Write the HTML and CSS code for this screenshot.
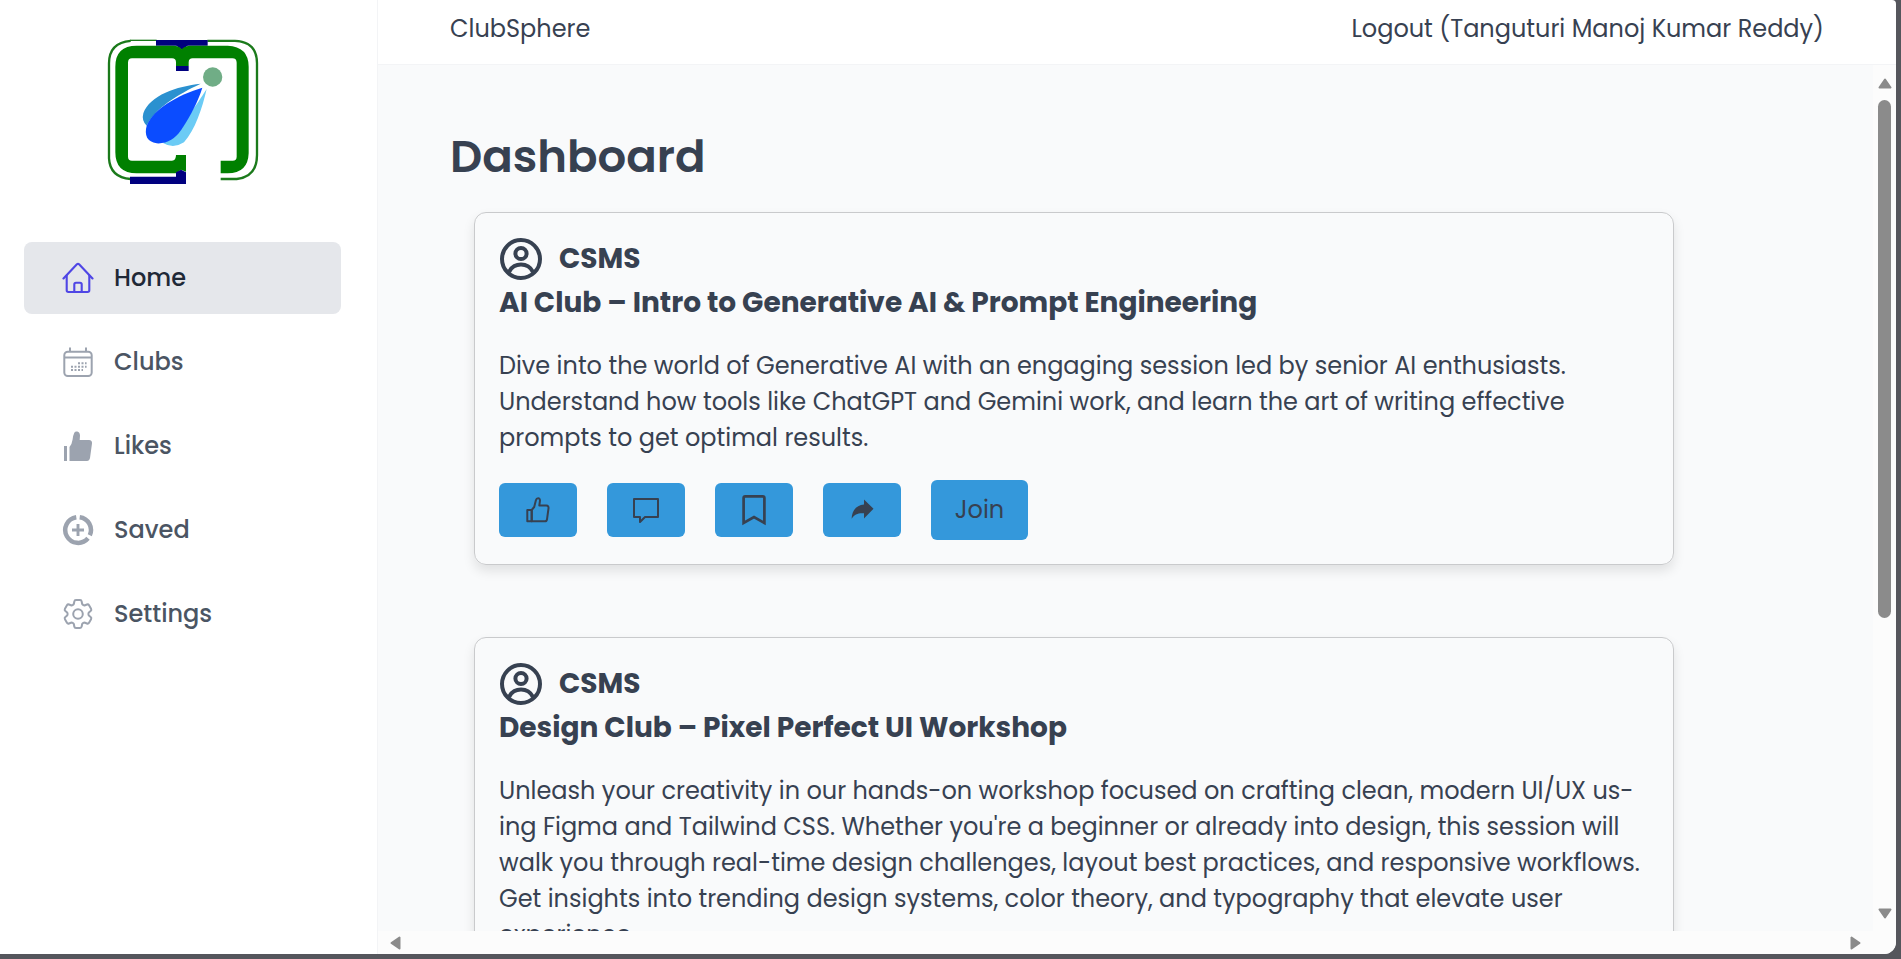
FILE: index.html
```html
<!DOCTYPE html>
<html lang="en">
<head>
<meta charset="utf-8">
<title>ClubSphere</title>
<link rel="stylesheet" href="styles.css">
</head>
<body>
<svg class="sprite" aria-hidden="true">
  <symbol id="avatar" viewBox="0 0 44 44"><g fill="none" stroke="currentColor" stroke-width="4"><circle cx="22" cy="22" r="19"/><circle cx="22" cy="16.500" r="5.600"/><path d="M10 35c2.500-5 7-7.500 12-7.500S31.500 30 34 35"/></g></symbol>
  <symbol id="like" viewBox="0 0 32 32"><g fill="none" stroke="currentColor" stroke-width="2" stroke-linejoin="round"><path d="M5.300 16h4.400v11.300H5.300z"/><path d="M9.700 27.300h13.200c1.300 0 1.900-.8 2.100-2l1.500-11c.2-1.700-.5-2.700-2.100-2.700h-7.100l.6-4.400c.3-2-.5-2.900-1.800-2.900-1.200 0-1.900.7-2.200 1.900L12.200 13 9.700 16z"/></g></symbol>
  <symbol id="comment" viewBox="0 0 32 32"><path d="M4 5h24v18H15l-5 5v-5H4z" fill="none" stroke="currentColor" stroke-width="2" stroke-linejoin="round"/></symbol>
  <symbol id="bookmark" viewBox="0 0 32 32"><path d="M5.600 29V4q0-1.700 1.700-1.700h17.400q1.700 0 1.700 1.700v25L16 23z" fill="none" stroke="currentColor" stroke-width="2.700"/></symbol>
  <symbol id="share" viewBox="0 0 32 32"><path d="M18 5.500l9.500 9.300-9.500 9.700v-5.300c-6-.4-9.500 1.100-12.400 5.600.3-8.500 4.900-13.500 12.400-14.300z" fill="currentColor"/></symbol>
</svg>
<div class="window">
  <aside class="sidebar">
    <svg class="logo" viewBox="75 54 480 450" role="img" aria-label="ClubSphere logo">
      <path d="M152 62.500Q87 68 87 130V415Q90 472 152 477M382 62.500H465Q531 65 531 130V405Q531 470 470 477H422" fill="none" stroke="#1b7a1b" stroke-width="7"/>
      <path d="M150 61H230" stroke="#1b7a1b" stroke-width="4"/>
      <path d="M228 60h155v17h-60l-17 12-17-12h-61z" fill="#00007f"/>
      <path d="M305 88q10-11 26-11H443Q506 80 506 140V400Q504 460 443 460H422V422H458Q470 422 470 410V128Q470 115 457 115H338Q326 115 326 127V138H288V127Q288 115 276 115H156Q144 115 144 128V410Q144 422 156 422H276Q288 422 288 405H318V455L303 449 288 460H170Q106 460 106 397V140Q106 77 170 77H280Q298 77 305 88z" fill="#008000"/>
      <path d="M288 138h38v15h-38zM150 470H288V457L303 449 318 457V492H150z" fill="#00007f"/>
      <circle cx="398" cy="171" r="29" fill="#70ad86"/>
      <path d="M362 191C290 199 210 225 190 280Q184 302 200 317C225 265 290 225 362 191z" fill="#2b91d0"/>
      <path d="M380 207C365 230 310 320 249 369Q280 388 312 367C345 330 367 265 380 207z" fill="#6bcbf5"/>
      <path d="M367 203C295 225 220 265 200 317Q188 362 230 370Q275 373 305 328C333 285 354 244 367 203z" fill="#0b4cff"/>
    </svg>
    <nav class="nav">
      <a class="nav-item active" href="#"><svg viewBox="0 0 32 32"><g fill="none" stroke="currentColor" stroke-width="2.100" stroke-linecap="round" stroke-linejoin="round"><path d="M1.500 16.500 14.900 2.300q1.100-1 2.200 0L30.500 16.500"/><path d="M4.700 13.500v14.800q0 1.700 1.700 1.700h19.200q1.700 0 1.700-1.700V13.500M12.300 30v-7.600q0-1.700 1.700-1.700h4q1.700 0 1.700 1.700V30"/></g></svg>Home</a>
      <a class="nav-item" href="#"><svg viewBox="0 0 32 32"><g fill="none" stroke="currentColor" stroke-width="2"><rect x="2.300" y="5.700" width="27.400" height="24.300" rx="3.500"/><path d="M2.300 11.500h27.400M8 1.500v4M24 1.500v4"/><path d="M16 17.300h8.600M9 20.700h15.600M9 24.100h12" stroke-dasharray="2 1.500"/></g></svg>Clubs</a>
      <a class="nav-item" href="#"><svg viewBox="0 0 32 32"><path d="M2 16h3v15H2zM7.500 31V17Q10 14 10.600 9.500 11.200 5 12.300 2.800 13.300 1 15.300 1.500 17.800 2.200 18 5.500L17.700 10H27Q30.300 10.300 30 13.500L28 28Q27.300 31 25 31z" fill="currentColor"/></svg>Likes</a>
      <a class="nav-item" href="#"><svg viewBox="0 0 32 32"><g fill="none" stroke="currentColor"><path d="M14.300 3.200A12.900 12.900 0 1 0 26 24.300" stroke-width="4.500"/><path d="M17.700 3.200A12.900 12.900 0 0 1 27.800 21.300" stroke-width="4.500"/><path d="M10 16h12M16 10v12" stroke-width="2.900"/></g></svg>Saved</a>
      <a class="nav-item" href="#"><svg viewBox="1.650 1.650 20.700 20.700"><g fill="none" stroke="currentColor" stroke-width="1.300" stroke-linejoin="round"><path d="M9.594 3.940c.09-.542.56-.94 1.110-.94h2.593c.55 0 1.020.398 1.110.94l.213 1.281c.063.374.313.686.645.87.074.04.147.083.22.127.325.196.72.257 1.075.124l1.217-.456a1.125 1.125 0 0 1 1.370.49l1.296 2.247a1.125 1.125 0 0 1-.26 1.431l-1.003.827c-.293.241-.438.613-.43.992a7.723 7.723 0 0 1 0 .255c-.008.378.137.75.43.991l1.004.827c.424.35.534.955.26 1.430l-1.298 2.247a1.125 1.125 0 0 1-1.369.491l-1.217-.456c-.355-.133-.75-.072-1.076.124a6.470 6.470 0 0 1-.22.128c-.331.183-.581.495-.644.869l-.213 1.281c-.09.543-.56.94-1.110.94h-2.594c-.55 0-1.019-.398-1.110-.94l-.213-1.281c-.062-.374-.312-.686-.644-.87a6.520 6.520 0 0 1-.22-.127c-.325-.196-.72-.257-1.076-.124l-1.217.456a1.125 1.125 0 0 1-1.369-.49l-1.297-2.247a1.125 1.125 0 0 1 .26-1.431l1.004-.827c.292-.24.437-.613.43-.991a6.932 6.932 0 0 1 0-.255c.007-.38-.138-.751-.43-.992l-1.004-.827a1.125 1.125 0 0 1-.26-1.430l1.297-2.247a1.125 1.125 0 0 1 1.370-.491l1.216.456c.356.133.751.072 1.076-.124.072-.044.146-.086.22-.128.332-.183.582-.495.644-.869l.214-1.280Z"/><circle cx="12" cy="12" r="3.100"/></g></svg>Settings</a>
    </nav>
  </aside>
  <div class="page">
    <header class="topbar">
      <a href="#">ClubSphere</a>
      <a href="#">Logout (Tanguturi Manoj Kumar Reddy)</a>
    </header>
    <div class="viewport">
      <main class="content">
        <h1>Dashboard</h1>
        <article class="card">
          <div class="author"><svg><use href="#avatar"/></svg>CSMS</div>
          <h2>AI Club – Intro to Generative AI &amp; Prompt Engineering</h2>
          <p>Dive into the world of Generative AI with an engaging session led by senior AI enthusiasts.<br>Understand how tools like ChatGPT and Gemini work, and learn the art of writing effective<br>prompts to get optimal results.</p>
          <div class="actions">
            <button aria-label="Like"><svg><use href="#like"/></svg></button>
            <button aria-label="Comment"><svg><use href="#comment"/></svg></button>
            <button aria-label="Save"><svg><use href="#bookmark"/></svg></button>
            <button aria-label="Share"><svg><use href="#share"/></svg></button>
            <button class="join">Join</button>
          </div>
        </article>
        <article class="card">
          <div class="author"><svg><use href="#avatar"/></svg>CSMS</div>
          <h2>Design Club – Pixel Perfect UI Workshop</h2>
          <p>Unleash your creativity in our hands-on workshop focused on crafting clean, modern UI/UX us-<br>ing Figma and Tailwind CSS. Whether you're a beginner or already into design, this session will<br>walk you through real-time design challenges, layout best practices, and responsive workflows.<br>Get insights into trending design systems, color theory, and typography that elevate user<br>experience.</p>
        </article>
      </main>
      <div class="scroll-y" aria-hidden="true">
        <svg viewBox="0 0 14 11"><path d="M7 1.500 12.500 9.500h-11z"/></svg>
        <div class="track"><div class="thumb"></div></div>
        <svg viewBox="0 0 14 11"><path d="M7 9.500 12.500 1.500h-11z"/></svg>
      </div>
      <div class="scroll-x" aria-hidden="true">
        <svg viewBox="0 0 11 14"><path d="M1.500 7 9.500 1.500v11z"/></svg>
        <svg viewBox="0 0 11 14"><path d="M9.500 7 1.500 1.500v11z"/></svg>
      </div>
    </div>
  </div>
</div>
</body>
</html>
```
FILE: styles.css
```css
* { box-sizing: border-box; }
body {
  margin: 0;
  height: 100vh;
  padding: 0 5px 5px 0;
  overflow: hidden;
  background: #55565c;
  color: #374151;
  font: 24px/36px Poppins, Inter, sans-serif;
}
a { color: inherit; text-decoration: none; }
.sprite { position: absolute; width: 0; height: 0; }
.window {
  display: flex;
  height: 100%;
  overflow: hidden;
  background: #fff;
  border-radius: 0 4px 12px 0;
}
.sidebar {
  flex: 0 0 378px;
  padding: 38px 36px 0 24px;
  border-right: 1px solid #f3f4f6;
}
.logo { display: block; width: 160px; height: 150px; margin: 0 auto 54px 81px; }
.nav { display: flex; flex-direction: column; gap: 12px; }
.nav-item {
  display: flex;
  align-items: center;
  gap: 20px;
  height: 72px;
  padding-left: 38px;
  border-radius: 8px;
  color: #4b5563;
  font-weight: 500;
}
.nav-item svg { width: 32px; height: 32px; color: #9ca3af; }
.nav-item.active { background: #e5e7eb; color: #1f2937; }
.nav-item.active svg { color: #4f46e5; }
.page { flex: 1; min-width: 0; display: flex; flex-direction: column; }
.topbar {
  flex: 0 0 65px;
  display: flex;
  justify-content: space-between;
  padding: 11px 72px 0;
  border-bottom: 1px solid #f3f4f6;
}
.viewport {
  flex: 1;
  min-height: 0;
  display: grid;
  grid-template: minmax(0, 1fr) 23px / minmax(0, 1fr) 23px;
  background: #fcfcfc;
}
.content { overflow: hidden; padding: 64px 72px 0; background: #f9fafb; }
h1 { margin: 0 0 28px; font-size: 45px; line-height: 55px; font-weight: 600; }
.card {
  max-width: 1200px;
  margin: 0 24px 72px;
  padding: 24px;
  border: 1px solid #c9cacc;
  border-radius: 12px;
  box-shadow: 0 6px 12px rgba(0, 0, 0, 0.1);
}
.author {
  display: flex;
  align-items: center;
  gap: 16px;
  height: 44px;
  margin-bottom: 2px;
  font-size: 28px;
  font-weight: 700;
}
.author svg { width: 44px; height: 44px; }
h2 { margin: 0; font-size: 28px; line-height: 40px; font-weight: 700; }
.card p { margin: 25px 0 24px; white-space: nowrap; }
.actions { display: flex; align-items: center; gap: 30px; }
button {
  width: 78px;
  height: 54px;
  padding: 0;
  border: 0;
  border-radius: 6px;
  background: #3498db;
  color: #374151;
  font: inherit;
}
button svg { display: block; width: 32px; height: 32px; margin: 0 auto; }
button.join { width: 97px; height: 60px; }
.scroll-y {
  display: flex;
  flex-direction: column;
  align-items: center;
  gap: 11px;
  padding: 13px 0 12px;
}
.scroll-y svg { flex: none; width: 14px; height: 11px; }
.track { flex: 1; }
.thumb { width: 13px; height: 65%; border-radius: 7px; background: #8b8b8b; }
.scroll-x {
  display: flex;
  justify-content: space-between;
  align-items: center;
  padding: 0 12px;
}
.scroll-x svg { width: 11px; height: 14px; }
.scroll-y path, .scroll-x path { fill: #8b8b8b; stroke: #8b8b8b; stroke-width: 2; stroke-linejoin: round; }
```
